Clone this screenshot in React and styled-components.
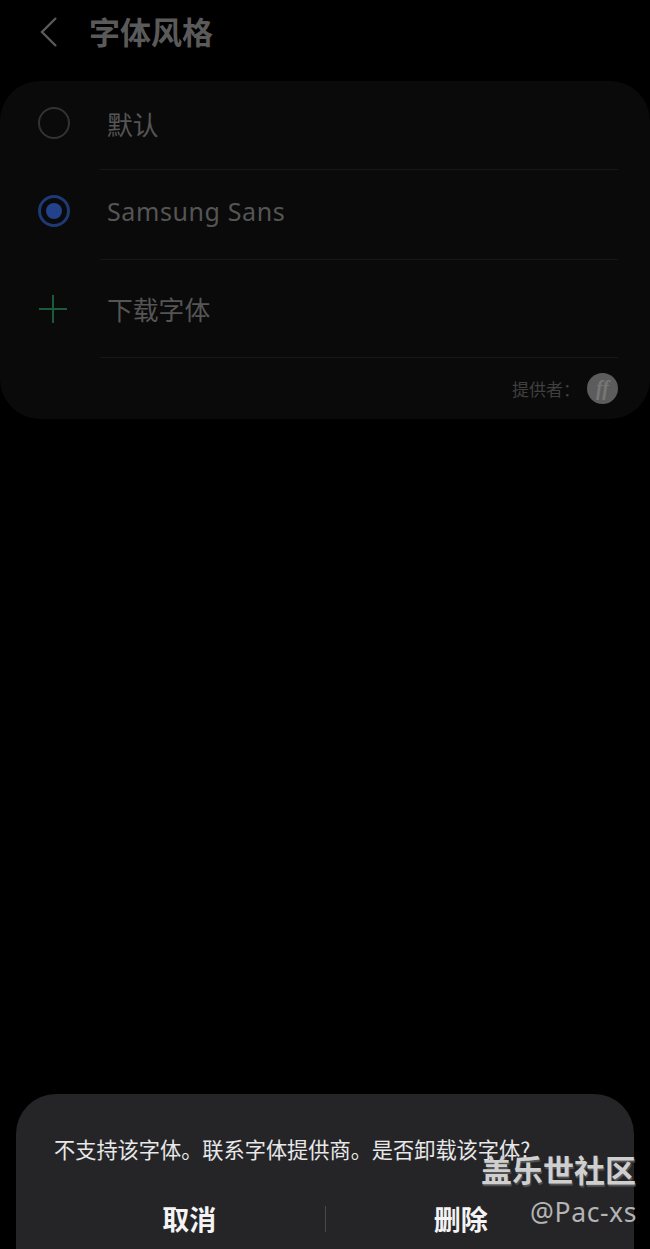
import React from 'react';
import styled, { createGlobalStyle } from 'styled-components';

const CJK = '"Noto Sans CJK SC", "Noto Sans", sans-serif';

const GlobalStyle = createGlobalStyle`
  html, body {
    margin: 0;
    padding: 0;
    background: #000;
  }
  body {
    font-family: ${CJK};
  }
`;

const Screen = styled.div`
  position: relative;
  width: 650px;
  height: 1249px;
  background: #000;
  overflow: hidden;
  display: flex;
  flex-direction: column;
`;

const Header = styled.header`
  height: 81px;
  box-sizing: border-box;
  padding: 0 0 17px 39px;
  display: flex;
  align-items: center;
  gap: 30px;
`;

const Title = styled.h1`
  margin: 0;
  font-size: 31px;
  line-height: 40px;
  font-weight: 700;
  color: #5a5a5a;
  position: relative;
  top: -1px;
`;

const ListCard = styled.section`
  height: 338px;
  box-sizing: border-box;
  background: #0a0a0a;
  border-radius: 40px;
  display: flex;
  flex-direction: column;
`;

const Row = styled.div`
  height: ${props => props.$height}px;
  box-sizing: border-box;
  display: flex;
  padding-left: 38px;
`;

const IconSlot = styled.div`
  width: 70px;
  flex: none;
  box-sizing: border-box;
  padding-bottom: ${props => props.$lift || 0}px;
  display: flex;
  align-items: center;
`;

const RowBody = styled.div`
  flex: 1;
  margin: 0 32px 0 -8px;
  box-sizing: border-box;
  border-bottom: 1px solid #171717;
  display: flex;
  align-items: center;
  padding: 0 0 ${props => props.$lift || 0}px 7px;
`;

const RowLabel = styled.span`
  font-size: ${props => (props.$latin ? 25 : 25.8)}px;
  line-height: 36px;
  color: #555;
  font-family: ${props => (props.$latin ? '"Noto Sans", sans-serif' : CJK)};
  letter-spacing: ${props => (props.$latin ? '0.6px' : '0')};
`;

const Radio = styled.span`
  width: 32px;
  height: 32px;
  box-sizing: border-box;
  border-radius: 50%;
  border: ${props => (props.$checked ? '3px solid #1e3a75' : '2px solid #333')};
  display: flex;
  align-items: center;
  justify-content: center;
  &::after {
    content: '';
    display: ${props => (props.$checked ? 'block' : 'none')};
    width: 16px;
    height: 16px;
    border-radius: 50%;
    background: #22438c;
  }
`;

const Provider = styled.div`
  flex: 1;
  display: flex;
  justify-content: flex-end;
  align-items: center;
  gap: 7px;
  padding: 0 32px 0 0;
`;

const ProviderLabel = styled.span`
  font-size: 17px;
  color: #3f3f3f;
`;

const ProviderBadge = styled.span`
  width: 31px;
  height: 31px;
  border-radius: 50%;
  background: #5c5c5c;
  color: #777;
  font-family: "Liberation Serif", serif;
  font-style: italic;
  font-weight: 700;
  font-size: 20px;
  display: flex;
  align-items: center;
  justify-content: center;
`;

const Dialog = styled.section`
  position: absolute;
  left: 16px;
  right: 16px;
  bottom: 0;
  height: 155px;
  box-sizing: border-box;
  background: #252528;
  border-radius: 40px 40px 0 0;
  padding: 40px 38px 0;
  display: flex;
  flex-direction: column;
`;

const DialogText = styled.p`
  margin: 0;
  font-size: 21.2px;
  line-height: 30px;
  color: #e8e8e8;
  white-space: nowrap;
`;

const DialogActions = styled.div`
  margin-top: 35px;
  display: flex;
  align-items: center;
`;

const ActionButton = styled.button`
  flex: 1;
  background: none;
  border: none;
  padding: 0;
  font-family: ${CJK};
  font-size: 27px;
  line-height: 40px;
  font-weight: 700;
  color: #f4f4f4;
`;

const ActionDivider = styled.span`
  width: 1px;
  height: 26px;
  background: #48484b;
  flex: none;
`;

const Watermark = styled.div`
  position: absolute;
  right: 14px;
  top: 1147px;
  display: flex;
  flex-direction: column;
  align-items: flex-end;
`;

const WatermarkTitle = styled.span`
  font-size: 31px;
  line-height: 44px;
  font-weight: 700;
  color: #cfcfcf;
  text-shadow: 1px 2px 1px #555;
`;

const WatermarkHandle = styled.span`
  margin: 4px -1px 0 0;
  font-family: "Noto Sans", sans-serif;
  font-size: 26.5px;
  line-height: 34px;
  letter-spacing: 0.6px;
  color: #b4b4b4;
`;

function App() {
  return (
    <Screen>
      <GlobalStyle />
      <Header>
        <svg width="20" height="32" viewBox="0 0 20 32" fill="none">
          <path d="M17 2 L3 16 L17 30" stroke="#5a5a5a" strokeWidth="2.4" />
        </svg>
        <Title>字体风格</Title>
      </Header>

      <ListCard>
        <Row $height={89}>
          <IconSlot $lift={6}><Radio /></IconSlot>
          <RowBody $lift={2}><RowLabel>默认</RowLabel></RowBody>
        </Row>
        <Row $height={90}>
          <IconSlot $lift={8}><Radio $checked /></IconSlot>
          <RowBody $lift={8}><RowLabel $latin>Samsung Sans</RowLabel></RowBody>
        </Row>
        <Row $height={98}>
          <IconSlot>
            <svg width="30" height="30" viewBox="0 0 30 30" fill="none">
              <path d="M15 1 V29 M1 15 H29" stroke="#1c5a3c" strokeWidth="2" />
            </svg>
          </IconSlot>
          <RowBody><RowLabel>下载字体</RowLabel></RowBody>
        </Row>
        <Provider>
          <ProviderLabel>提供者：</ProviderLabel>
          <ProviderBadge>ff</ProviderBadge>
        </Provider>
      </ListCard>

      <Dialog>
        <DialogText>不支持该字体。联系字体提供商。是否卸载该字体?</DialogText>
        <DialogActions>
          <ActionButton>取消</ActionButton>
          <ActionDivider />
          <ActionButton>删除</ActionButton>
        </DialogActions>
      </Dialog>

      <Watermark>
        <WatermarkTitle>盖乐世社区</WatermarkTitle>
        <WatermarkHandle>@Pac-xs</WatermarkHandle>
      </Watermark>
    </Screen>
  );
}

export default App;
